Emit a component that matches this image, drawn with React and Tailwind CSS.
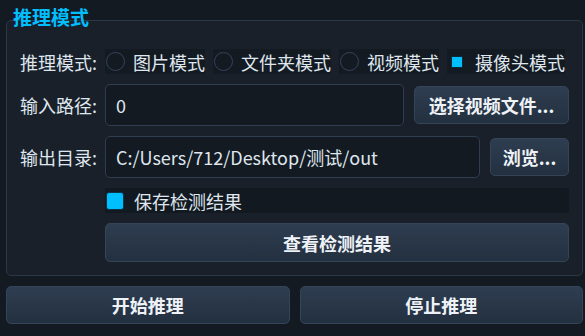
import React from "react";

const font = { fontFamily: '"Noto Sans CJK SC", "Noto Sans", sans-serif' };

const Radio = ({ label, checked }) => (
  <div className="flex shrink-0 items-center gap-[8px] h-[25px] bg-[#141a22] whitespace-nowrap">
    <div className="w-[20px] h-[20px] shrink-0 flex items-center justify-center">
      {checked ? (
        <div className="w-[12px] h-[12px] bg-[#00bfff] border border-[#0b2a3a]" />
      ) : (
        <div className="w-[19px] h-[19px] rounded-full border-[1.5px] border-[#34435a] bg-[#141a22]" />
      )}
    </div>
    <span>{label}</span>
  </div>
);

const Btn = ({ children, className = "" }) => (
  <button
    className={`flex items-center justify-center whitespace-nowrap rounded-[5px] border border-[#34455a] bg-gradient-to-b from-[#2e3d50] to-[#233040] font-bold text-[#eef2f7] ${className}`}
  >
    {children}
  </button>
);

const Input = ({ value, className = "" }) => (
  <div
    className={`flex items-center h-[42px] rounded-[5px] border border-[#2f3e51] bg-[#141a22] pl-[10px] text-[#dfe6ee] whitespace-nowrap ${className}`}
  >
    {value}
  </div>
);

export default function App() {
  return (
    <div
      style={font}
      className="w-[585px] h-[336px] bg-[#141a21] pl-[6px] pr-[2px] pt-[20px] flex flex-col gap-[10px] text-[18px] leading-none text-[#dfe6ee] overflow-hidden"
    >
      {/* Group box */}
      <div className="relative h-[256px] rounded-[5px] border border-[#2b3848] bg-[#19202a] pt-[28px] pl-[13px] pr-[13px] flex flex-col gap-[10px]">
        <div className="absolute left-[6px] top-[-14px] text-[19px] font-bold text-[#00bfff] whitespace-nowrap">
          推理模式
        </div>

        {/* Mode row */}
        <div className="flex items-center h-[25px]">
          <span className="w-[85px] shrink-0 whitespace-nowrap">推理模式:</span>
          <div className="flex items-center gap-[8px]">
            <Radio label="图片模式" />
            <Radio label="文件夹模式" />
            <Radio label="视频模式" />
            <Radio label="摄像头模式" checked />
          </div>
        </div>

        {/* Input path */}
        <div className="flex items-center">
          <span className="w-[85px] shrink-0 whitespace-nowrap">输入路径:</span>
          <Input value="0" className="flex-1" />
          <Btn className="ml-[10px] w-[155px] h-[38px]">选择视频文件...</Btn>
        </div>

        {/* Output dir */}
        <div className="flex items-center">
          <span className="w-[85px] shrink-0 whitespace-nowrap">输出目录:</span>
          <Input value="C:/Users/712/Desktop/测试/out" className="flex-1" />
          <Btn className="ml-[10px] w-[79px] h-[38px]">浏览...</Btn>
        </div>

        {/* Save checkbox */}
        <div className="ml-[85px] h-[25px] bg-[#131920] flex items-center gap-[10px]">
          <div className="ml-[1px] w-[18px] h-[18px] rounded-[3px] bg-[#00bfff] border border-[#0e3447]" />
          <span>保存检测结果</span>
        </div>

        <Btn className="ml-[85px] h-[39px]">查看检测结果</Btn>
      </div>

      {/* Bottom buttons */}
      <div className="flex gap-[10px]">
        <Btn className="flex-1 h-[38px]">开始推理</Btn>
        <Btn className="flex-1 h-[38px]">停止推理</Btn>
      </div>
    </div>
  );
}
